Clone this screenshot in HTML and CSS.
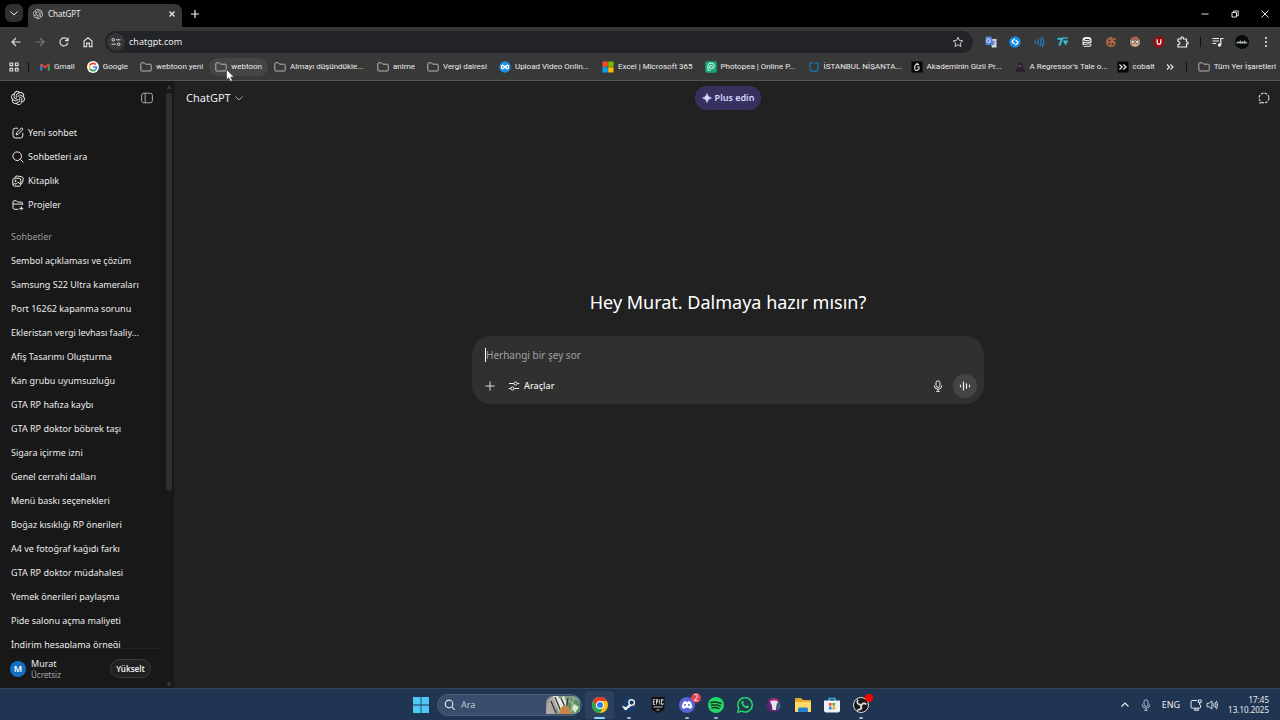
FILE: index.html
```html
<!DOCTYPE html>
<html lang="tr">
<head>
<meta charset="utf-8">
<meta name="viewport" content="width=device-width, initial-scale=1">
<title>ChatGPT</title>
<link rel="stylesheet" href="styles.css">
</head>
<body>
<svg class="defs" aria-hidden="true">
  <symbol id="logo" viewBox="0 0 24 24"><path fill="currentColor" d="M22.2819 9.8211a5.9847 5.9847 0 0 0-.5157-4.9108 6.0462 6.0462 0 0 0-6.5098-2.9A6.0651 6.0651 0 0 0 4.9807 4.1818a5.9847 5.9847 0 0 0-3.9977 2.9 6.0462 6.0462 0 0 0 .7427 7.0966 5.98 5.98 0 0 0 .511 4.9107 6.051 6.051 0 0 0 6.5146 2.9001A5.9847 5.9847 0 0 0 13.2599 24a6.0557 6.0557 0 0 0 5.7718-4.2058 5.9894 5.9894 0 0 0 3.9977-2.9001 6.0557 6.0557 0 0 0-.7475-7.0729zm-9.022 12.6081a4.4755 4.4755 0 0 1-2.8764-1.0408l.1419-.0804 4.7783-2.7582a.7948.7948 0 0 0 .3927-.6813v-6.7369l2.02 1.1686a.071.071 0 0 1 .038.052v5.5826a4.504 4.504 0 0 1-4.4945 4.4944zm-9.6607-4.1254a4.4708 4.4708 0 0 1-.5346-3.0137l.142.0852 4.783 2.7582a.7712.7712 0 0 0 .7806 0l5.8428-3.3685v2.3324a.0804.0804 0 0 1-.0332.0615L9.74 19.9502a4.4992 4.4992 0 0 1-6.1408-1.6464zM2.3408 7.8956a4.485 4.485 0 0 1 2.3655-1.9728V11.6a.7664.7664 0 0 0 .3879.6765l5.8144 3.3543-2.0201 1.1685a.0757.0757 0 0 1-.071 0l-4.8303-2.7865A4.504 4.504 0 0 1 2.3408 7.872zm16.5963 3.8558L13.1038 8.364 15.1192 7.2a.0757.0757 0 0 1 .071 0l4.8303 2.7913a4.4944 4.4944 0 0 1-.6765 8.1042v-5.6772a.79.79 0 0 0-.407-.667zm2.0107-3.0231l-.142-.0852-4.7735-2.7818a.7759.7759 0 0 0-.7854 0L9.409 9.2297V6.8974a.0662.0662 0 0 1 .0284-.0615l4.8303-2.7866a4.4992 4.4992 0 0 1 6.6802 4.66zM8.3065 12.863l-2.02-1.1638a.0804.0804 0 0 1-.038-.0567V6.0742a4.4992 4.4992 0 0 1 7.3757-3.4537l-.142.0805L8.704 5.459a.7948.7948 0 0 0-.3927.6813zm1.0976-2.3654l2.602-1.4998 2.6069 1.4998v2.9994l-2.5974 1.4997-2.6067-1.4997Z"/></symbol>
  <symbol id="folder" viewBox="0 0 12 12"><path d="M.8 2.6q0-.8.8-.8h2.8l1.3 1.4h4.7q.8 0 .8.8v5.2q0 .8-.8.8H1.6q-.8 0-.8-.8z" fill="none" stroke="#b4b4b4"/></symbol>
  <symbol id="chev" viewBox="0 0 10 10"><path d="M1.5 3.5 5 7l3.500-3.500" fill="none" stroke="currentColor"/></symbol>
  <symbol id="mic" viewBox="0 0 12 12"><g fill="none" stroke="currentColor"><rect x="4" y=".8" width="4" height="6.600" rx="2"/><path d="M2.200 5.500a3.800 3.800 0 0 0 7.600 0M6 9.300v2.200M4.300 11.400h3.400"/></g></symbol>
</svg>

<header class="browser">
  <div class="tabstrip">
    <button class="tab-search" aria-label="Sekmelerde ara"><svg class="i10"><use href="#chev"/></svg></button>
    <div class="tab">
      <svg class="i10 favicon"><use href="#logo"/></svg>
      <span class="tab-title">ChatGPT</span>
      <button aria-label="Sekmeyi kapat"><svg class="i8" viewBox="0 0 8 8"><path d="m1.500 1.500 5 5m0-5-5 5" stroke="#eee" stroke-width="1.200"/></svg></button>
    </div>
    <button class="newtab" aria-label="Yeni sekme"><svg class="i10" viewBox="0 0 10 10"><path d="M5 1v8M1 5h8" stroke="#eee" stroke-width="1.200"/></svg></button>
    <div class="window-buttons">
      <button aria-label="Simge durumuna küçült"><svg class="i10" viewBox="0 0 10 10"><path d="M1.500 5h7" stroke="#ddd"/></svg></button>
      <button aria-label="Önceki boyut"><svg class="i10" viewBox="0 0 10 10"><path d="M2 3.500h4.500V8H2zM3.500 3.500V2h4.700v4.700H6.500" fill="none" stroke="#ddd"/></svg></button>
      <button aria-label="Kapat"><svg class="i10" viewBox="0 0 10 10"><path d="m1.500 1.500 7 7m0-7-7 7" stroke="#ddd"/></svg></button>
    </div>
  </div>

  <div class="toolbar">
    <nav class="nav-buttons" aria-label="Gezinme">
      <button aria-label="Geri"><svg class="i12" viewBox="0 0 12 12"><path d="M10.500 6H2m4-4L2 6l4 4" fill="none" stroke="#ddd" stroke-width="1.200"/></svg></button>
      <button aria-label="İleri"><svg class="i12" viewBox="0 0 12 12"><path d="M1.500 6H10M6 2l4 4-4 4" fill="none" stroke="#777" stroke-width="1.200"/></svg></button>
      <button aria-label="Yenile"><svg class="i12" viewBox="0 0 12 12"><path d="M9.800 7A4 4 0 1 1 8.900 3.200L10 4.300M10.100 1.500v3.100H7" fill="none" stroke="#ddd" stroke-width="1.200"/></svg></button>
      <button aria-label="Ana sayfa"><svg class="i12" viewBox="0 0 12 12"><path d="M2 5 6 1.800 10 5v5.600H7.400V7.200H4.600v3.400H2z" fill="none" stroke="#ddd" stroke-width="1.200"/></svg></button>
    </nav>
    <div class="omnibox">
      <button class="site-info" aria-label="Site bilgileri"><svg class="i10" viewBox="0 0 10 10"><g fill="none" stroke="#ddd"><circle cx="2.300" cy="2.800" r="1.300"/><path d="M5 2.800h4.500M.5 7.200H5"/><circle cx="7.700" cy="7.200" r="1.300"/></g></svg></button>
      <input type="text" aria-label="Adres" value="chatgpt.com">
      <button aria-label="Yer işareti ekle"><svg class="i12" viewBox="0 0 12 12"><path d="m6 1.300 1.400 3.100 3.400.4-2.500 2.300.6 3.400L6 8.800l-2.900 1.700.6-3.400-2.500-2.300 3.400-.4z" fill="none" stroke="#ccc"/></svg></button>
    </div>
    <div class="extensions">
      <button aria-label="Çeviri"><svg class="i12" viewBox="0 0 12 12"><path d="M5 3h6.500v8.500H7z" fill="#d5d8e0"/><path d="M.5.500h6L9 9H.500z" fill="#4f7bdc"/><path d="M5.400 3.700A2 2 0 1 0 5.600 5H4" fill="none" stroke="#fff" stroke-width=".9"/><path d="M7.500 5.500h3.300M9.200 5v.8q-.3 2-1.500 3M8.300 6.500q.8 1.500 2 2" fill="none" stroke="#657aa8" stroke-width=".7"/></svg></button>
      <button aria-label="Shazam"><svg class="i12" viewBox="0 0 12 12"><circle cx="6" cy="6" r="5.600" fill="#1690e8"/><path d="M5.500 7.800 3.700 6.500Q2.700 5.500 3.800 4.500L5.900 3M6.500 4.200l1.800 1.300q1 1 0 2L6.100 9" fill="none" stroke="#fff" stroke-width="1.300"/></svg></button>
      <button aria-label="Ses"><svg class="i12" viewBox="0 0 12 12"><path d="M2 4.500q1 1.500 0 3M4.300 3.200q2 2.800 0 5.600M6.700 2q3 4 0 8M9 1q3.600 5 0 10" fill="none" stroke="#2187d8" stroke-width="1.100"/></svg></button>
      <button aria-label="7TV"><svg class="i12" viewBox="0 0 12 12"><path d="M.5 2.800h4.700L2.300 9.500" fill="none" stroke="#36bdd9" stroke-width="2"/><path d="M6.200 5.200 8.500 9.500 11 5.200 10 3.700 8.500 5 7.200 3.700z" fill="#36bdd9"/><path d="M6 2h5" stroke="#36bdd9" stroke-width="1.300"/></svg></button>
      <button aria-label="Depo"><svg class="i12" viewBox="0 0 12 12"><rect x="1.500" y="1" width="9" height="10" rx="3" fill="#eee"/><path d="M4 3.500h4.500M2 5q4 1.500 7.500 0M3 7.500q4 1.300 8 0M2 9.300q4 1 7 0" fill="none" stroke="#333"/></svg></button>
      <button aria-label="Çerezler"><svg class="i12" viewBox="0 0 12 12"><path d="M7.500 1.200A5 5 0 1 0 11 6Q8 6 7.500 1.200z" fill="#ae6544"/><circle cx="9.500" cy="3" r="1.200" fill="#ae6544"/><g fill="#492d27"><circle cx="4.500" cy="4.500" r="1"/><circle cx="4" cy="8" r="1"/><circle cx="7.500" cy="8" r="1.100"/></g></svg></button>
      <button aria-label="Profil uzantısı"><svg class="i12" viewBox="0 0 12 12"><circle cx="6" cy="6" r="5" fill="#d9a582"/><path d="M1.500 4Q3 .500 6 .600T10.500 4z" fill="#a36352"/><g fill="#e8e5db" stroke="#657575"><circle cx="3.800" cy="6" r="1.700"/><circle cx="8.200" cy="6" r="1.700"/></g></svg></button>
      <button aria-label="uBlock"><svg class="i12" viewBox="0 0 12 12"><path d="M3.700.500h4.600l3.200 3.200v4.600l-3.200 3.200H3.700L.5 8.300V3.700z" fill="#990d18"/><path d="M4.200 3.300v3q0 2 1.800 2t1.800-2v-3" fill="none" stroke="#fff" stroke-width="1.200"/></svg></button>
      <button aria-label="Uzantılar"><svg class="i12" viewBox="0 0 12 12"><path d="M1 3h3V2q0-1 1.200-1T6.500 2v1h3v3h.7q1 0 1 1.100t-1 1.100h-.7V11H1V8.500q2-.2 2-1.500T1 5.500z" fill="none" stroke="#eee" stroke-width="1.200"/></svg></button>
    </div>
    <span class="divider"></span>
    <div class="browser-menu">
      <button aria-label="Medya"><svg class="i12" viewBox="0 0 12 12"><path d="M.5 2.500H7M.5 5H7M.5 7.500h3.700M8.800 9V2.500h2.700" fill="none" stroke="#eee" stroke-width="1.200"/><circle cx="7.500" cy="9" r="1.700" fill="#eee"/></svg></button>
      <button aria-label="Profil"><svg class="i14" viewBox="0 0 14 14"><circle cx="7" cy="7" r="7" fill="#080909"/><path d="M1 7.500 3 6.400l1 .7L5.500 5l.7 2 1.500-1 .8 1 1.500-2 .6 1.700L13 8l-3 .8-2-.6-2 .5-2-.5-2 .2z" fill="#a7b2af"/></svg></button>
      <button aria-label="Menü"><svg class="i12" viewBox="0 0 12 12" fill="#eee"><circle cx="6" cy="2" r="1"/><circle cx="6" cy="6" r="1"/><circle cx="6" cy="10" r="1"/></svg></button>
    </div>
  </div>

  <nav class="bookmarks" aria-label="Yer işaretleri">
    <button class="apps" aria-label="Uygulamalar"><svg class="i10" viewBox="0 0 10 10"><path d="M1 1h2.600v2.600H1zM6.400 1H9v2.600H6.400zM1 6.400h2.600V9H1zM6.400 6.400H9V9H6.400z" fill="none" stroke="#ddd" stroke-width="1.200"/></svg></button>
    <span class="divider"></span>
    <a href="#"><svg class="i10" viewBox="0 0 12 12"><path d="M1.500 10.500v-8" stroke="#4285f4" stroke-width="2.200"/><path d="M10.500 10.500v-8" stroke="#34a853" stroke-width="2.200"/><path d="m1 2.500 5 4 5-4" fill="none" stroke="#ea4335" stroke-width="2.200"/></svg>Gmail</a>
    <a href="#"><svg class="i12" viewBox="0 0 12 12"><circle cx="6" cy="6" r="6" fill="#fff"/><g fill="none" stroke-width="1.700"><path d="M8.700 3.600A3.600 3.600 0 0 0 2.900 4.200" stroke="#ea4335"/><path d="M2.900 4.200a3.600 3.600 0 0 0 0 3.600" stroke="#fbbc05"/><path d="M2.900 7.800a3.600 3.600 0 0 0 5.600.8" stroke="#34a853"/><path d="M8.500 8.600Q9.600 7.600 9.600 6H6" stroke="#4285f4"/></g></svg>Google</a>
    <a href="#"><svg class="i12"><use href="#folder"/></svg>webtoon yeni</a>
    <a href="#" class="hovered"><svg class="i12"><use href="#folder"/></svg>webtoon
      <svg class="cursor" viewBox="0 0 9 13" aria-hidden="true"><path d="M.5.500v10.300l2.300-2 1.600 3.600 1.900-.8-1.600-3.500H8z" fill="#fff" stroke="#222" stroke-width=".5"/></svg></a>
    <a href="#" class="wide"><svg class="i12"><use href="#folder"/></svg>Almayı düşündükle...</a>
    <a href="#"><svg class="i12"><use href="#folder"/></svg>anime</a>
    <a href="#"><svg class="i12"><use href="#folder"/></svg>Vergi dairesi</a>
    <a href="#" class="wide"><svg class="i12" viewBox="0 0 12 12"><circle cx="6" cy="6" r="5.700" fill="#1d91e9"/><path d="M6 6Q2.500 9.500 2.500 6T6 6t3.500 0T6 6" fill="none" stroke="#fff" stroke-width="1.300"/></svg>Upload Video Onlin...</a>
    <a href="#"><svg class="i12" viewBox="0 0 12 12"><path fill="#f25022" d="M.5.500h5.300v5.300H.5z"/><path fill="#7fba00" d="M6.200.500h5.300v5.300H6.200z"/><path fill="#00a4ef" d="M.5 6.200h5.300v5.300H.5z"/><path fill="#ffb900" d="M6.200 6.200h5.300v5.300H6.200z"/></svg>Excel | Microsoft 365</a>
    <a href="#" class="wide"><svg class="i12" viewBox="0 0 12 12"><rect x=".3" y=".3" width="11.400" height="11.400" rx="2" fill="#19a878"/><path d="M3 10V4.700Q3 2 6 2t3.300 2.700T6.400 7.600Q4.600 7.600 4.600 6T6.200 4.500 7.300 5.700M5 10V8.500" fill="none" stroke="#e7fff5"/></svg>Photopea | Online P...</a>
    <a href="#" class="wide"><svg class="i12" viewBox="0 0 12 12"><path d="M2 1.500v5Q2 10.500 6 10.500t4-4v-5M4 1v2M8 1v2" fill="none" stroke="#1675a9" stroke-width="1.400"/></svg>İSTANBUL NİŞANTA...</a>
    <a href="#" class="wide"><svg class="i12" viewBox="0 0 12 12"><path d="M.5.500h11v11H.5z" fill="#050505"/><path d="M8 4.200Q7 3 5.200 3.500T3.700 7.500 8 8V6H6M7 2.300l-2 1" fill="none" stroke="#ddd" stroke-width="1.200"/></svg>Akademinin Gizli Pr...</a>
    <a href="#" class="wide"><svg class="i12" viewBox="0 0 12 12"><path d="M2 11V8l2-2 0-4 3-1 2 3v3l2 2v2z" fill="#2c2232"/><path d="M4.500 4h3v2h-3z" fill="#60405f"/></svg>A Regressor's Tale o...</a>
    <a href="#"><svg class="i12" viewBox="0 0 12 12"><rect x=".5" y=".5" width="11" height="11" rx="1" fill="#050505"/><path d="m2.500 3.500 2.700 2.500-2.700 2.500M6.300 3.500 9 6 6.300 8.500" fill="none" stroke="#eee" stroke-width="1.200"/></svg>cobalt</a>
    <div class="bookmarks-end">
      <button aria-label="Diğer yer işaretleri"><svg class="i10" viewBox="0 0 10 10"><path d="m2 2.500 2.500 2.500L2 7.500M5.500 2.500 8 5 5.500 7.500" fill="none" stroke="#eee" stroke-width="1.100"/></svg></button>
      <span class="divider"></span>
      <a href="#"><svg class="i12"><use href="#folder"/></svg>Tüm Yer İşaretleri</a>
    </div>
  </nav>
</header>

<div class="app">
  <aside class="sidebar">
    <div class="sidebar-content">
      <div class="sidebar-top">
        <a href="#" aria-label="ChatGPT"><svg class="i14"><use href="#logo"/></svg></a>
        <button aria-label="Kenar çubuğunu kapat"><svg class="i12" viewBox="0 0 12 12"><rect x=".6" y="1.200" width="10.800" height="9.600" rx="2.200" fill="none" stroke="#aaa"/><path d="M4.200 1.200v9.600" stroke="#aaa"/></svg></button>
      </div>
      <nav class="actions" aria-label="Menü">
        <a href="#"><svg class="i12" viewBox="0 0 12 12"><path d="M6 1.200H3.400Q1 1.200 1 3.600v5Q1 11 3.400 11h5q2.400 0 2.400-2.400V6M4.200 7.900l.4-2.200L9 1.300q.7-.6 1.400 0t.1 1.500L6.200 7.300z" fill="none" stroke="#eee"/></svg>Yeni sohbet</a>
        <a href="#"><svg class="i12" viewBox="0 0 12 12"><circle cx="5.200" cy="5.200" r="4.300" fill="none" stroke="#eee"/><path d="m8.400 8.400 3 3" stroke="#eee"/></svg>Sohbetleri ara</a>
        <a href="#"><svg class="i12" viewBox="0 0 12 12"><g fill="none" stroke="#eee"><path d="M3 3V2.600Q3.500.700 5.200 1l4.300.7q2 .4 1.700 2.300l-.6 3.300Q10.300 8.700 9 8.900"/><rect x=".8" y="3.200" width="8" height="8" rx="2"/><circle cx="3.500" cy="5.900" r=".7"/><path d="m1.200 9.500 1.600-1 1.200.8L6 7.200l2.700 2"/></g></svg>Kitaplık</a>
        <a href="#"><svg class="i12" viewBox="0 0 12 12"><path d="M6.500 10.300H2.600Q1 10.300 1 8.700V3Q1 1.700 2.300 1.700h2l1.400 1.400h3.500q1.500 0 1.500 1.700v1M1 5.100h9.700M9.300 7.400v4M7.300 9.400h4" fill="none" stroke="#eee"/></svg>Projeler</a>
      </nav>
      <section class="chats">
        <h2>Sohbetler</h2>
        <ul>
          <li><a href="#">Sembol açıklaması ve çözüm</a></li>
          <li><a href="#">Samsung S22 Ultra kameraları</a></li>
          <li><a href="#">Port 16262 kapanma sorunu</a></li>
          <li><a href="#">Ekleristan vergi levhası faaliy...</a></li>
          <li><a href="#">Afiş Tasarımı Oluşturma</a></li>
          <li><a href="#">Kan grubu uyumsuzluğu</a></li>
          <li><a href="#">GTA RP hafıza kaybı</a></li>
          <li><a href="#">GTA RP doktor böbrek taşı</a></li>
          <li><a href="#">Sigara içirme izni</a></li>
          <li><a href="#">Genel cerrahi dalları</a></li>
          <li><a href="#">Menü baskı seçenekleri</a></li>
          <li><a href="#">Boğaz kısıklığı RP önerileri</a></li>
          <li><a href="#">A4 ve fotoğraf kağıdı farkı</a></li>
          <li><a href="#">GTA RP doktor müdahalesi</a></li>
          <li><a href="#">Yemek önerileri paylaşma</a></li>
          <li><a href="#">Pide salonu açma maliyeti</a></li>
          <li><a href="#">İndirim hesaplama örneği</a></li>
        </ul>
      </section>
      <footer class="account">
        <span class="avatar">M</span>
        <div class="who"><span>Murat</span><small>Ücretsiz</small></div>
        <button class="upgrade">Yükselt</button>
      </footer>
    </div>
    <div class="scrollbar" aria-hidden="true">
      <svg class="i6" viewBox="0 0 6 6"><path d="M3 1 5.500 5h-5z" fill="#3c3c3c"/></svg>
      <div class="track"><div class="thumb"></div></div>
      <svg class="i6" viewBox="0 0 6 6"><path d="M3 5.500 5.500 1.500h-5z" fill="#3c3c3c"/></svg>
    </div>
  </aside>

  <main class="main">
    <header class="main-top">
      <button class="model">ChatGPT <svg class="i10"><use href="#chev"/></svg></button>
      <button class="plus"><svg class="i10" viewBox="0 0 10 10"><path d="M5 .5Q5.700 4.300 9.500 5 5.700 5.700 5 9.500 4.300 5.700.5 5 4.300 4.300 5 .500z" fill="#dcd8ff" stroke="#dcd8ff" stroke-width=".6"/></svg>Plus edin</button>
      <button class="temp" aria-label="Geçici sohbet"><svg class="i12" viewBox="0 0 12 12"><circle cx="6" cy="6" r="4.900" fill="none" stroke="#ddd" stroke-width="1.100" stroke-dasharray="2.700 1.150"/><path d="M1.200 10.900h2.200" stroke="#ddd"/></svg></button>
    </header>
    <div class="hero">
      <h1>Hey Murat. Dalmaya hazır mısın?</h1>
      <form class="composer">
        <div class="prompt"><span class="caret"></span><input type="text" aria-label="Mesaj" placeholder="Herhangi bir şey sor"></div>
        <div class="tools">
          <button type="button" aria-label="Ekle"><svg class="i12" viewBox="0 0 12 12"><path d="M6 1.500v9M1.500 6h9" stroke="#ddd"/></svg></button>
          <button type="button" class="tool-label"><svg class="i12" viewBox="0 0 12 12"><g fill="none" stroke="#eee"><path d="M1 3.500h4.800M9.300 3.500h2M.7 8.500h2M6.200 8.500h5"/><circle cx="7.500" cy="3.500" r="1.600"/><circle cx="4.400" cy="8.500" r="1.600"/></g></svg>Araçlar</button>
          <button type="button" class="dictate" aria-label="Dikte et"><svg class="i12"><use href="#mic"/></svg></button>
          <button type="button" class="voice" aria-label="Ses modu"><svg class="i12" viewBox="0 0 12 12"><path d="M1.500 5.200v1.600M4.500 2v8M7.500 3.800v4.400M10.500 5.200v1.600" stroke="#eee" stroke-width="1.200" stroke-linecap="round"/></svg></button>
        </div>
      </form>
    </div>
  </main>
</div>

<footer class="taskbar">
  <div class="pinned">
    <button aria-label="Başlat"><svg class="i16" viewBox="0 0 16 16"><path d="M0 0h7.600v7.600H0zM8.400 0H16v7.600H8.400zM0 8.400h7.600V16H0zM8.400 8.400H16V16H8.400z" fill="#4dc8f5"/></svg></button>
    <label class="search">
      <svg class="i12" viewBox="0 0 12 12"><circle cx="5" cy="5" r="3.800" fill="none" stroke="#ddd" stroke-width="1.200"/><path d="m7.800 7.800 3 3" stroke="#ddd" stroke-width="1.200"/></svg>
      <input type="search" placeholder="Ara" aria-label="Ara">
      <svg class="art" viewBox="0 0 34 18"><rect width="34" height="18" rx="7" fill="#829c85"/><path d="M0 18Q0 3 8 0l4 7-4 11z" fill="#b5a6a8"/><path d="M7 0h5l8 18h-6zM13 3l5-3 4 12-3 6z" fill="#e4e8df"/><path d="m9 1 7 17M5 5l5 12M15 2l5 11M22 2l-2 12" stroke="#343a3a" stroke-width="1.400"/><path d="M14 13l4-4 7 2v7H13z" fill="#c88547"/><path d="M23 4Q29 0 34 8v8l-8 1-4-7z" fill="#548e67"/><path d="m23 4 8 10M28 2l-3 14" stroke="#9abd84" stroke-width="1.400"/><path d="m28 8 5 3-4 6-3-4z" fill="#dce8cc"/></svg>
    </label>
    <button class="running active" aria-label="Chrome"><svg class="i16" viewBox="0 0 16 16"><circle cx="8" cy="8" r="8" fill="#fbc116"/><path d="M1.070 4A8 8 0 0 1 14.930 4H8a4 4 0 0 0-3.500 6z" fill="#e33b2e"/><path d="M1.070 4A8 8 0 0 0 8 16l3.500-6A4 4 0 0 1 4.500 10z" fill="#25a652"/><circle cx="8" cy="8" r="3.900" fill="#fff"/><circle cx="8" cy="8" r="3" fill="#3479e8"/></svg></button>
    <button class="running" aria-label="Steam"><svg class="i16" viewBox="0 0 16 16"><circle cx="8" cy="8" r="7.500" fill="#163b68"/><path d="m.8 8.500 4.200 1.700 4-3.700 1.200 2.700-3.700 2.600Q5 14.500 3 12z" fill="#eee"/><circle cx="10.600" cy="5.600" r="2.800" fill="#163b68" stroke="#eee" stroke-width="1.400"/></svg></button>
    <button aria-label="Epic Games"><svg class="i16" viewBox="0 0 16 16"><path d="M1.500 0h13v12.500L8 16l-6.500-3.500z" fill="#10100f"/><path d="M5.200 2.500H3.400v5h1.800M3.400 5h1.500M6.500 7.500v-5h1.300v2.500H6.500M9.700 2.500v5M13 4V2.500h-1.500v5H13V6M3.500 10h9M6.500 13h3" fill="none" stroke="#ddd" stroke-width=".9"/></svg></button>
    <button class="running discord" aria-label="Discord"><svg class="i16" viewBox="0 0 16 16"><circle cx="8" cy="8" r="8" fill="#5865d8"/><path d="M4.500 4.700 6.800 4l.6.900h1.200l.6-.9 2.300.7q1.800 3 1.600 6l-2.500 1.200-.8-1.200H6.200l-.8 1.200-2.500-1.200q-.2-3 1.600-6z" fill="#fff"/><circle cx="6" cy="8" r="1" fill="#5865d8"/><circle cx="10" cy="8" r="1" fill="#5865d8"/></svg><span class="badge">2</span></button>
    <button class="running" aria-label="Spotify"><svg class="i16" viewBox="0 0 16 16"><circle cx="8" cy="8" r="8" fill="#23d965"/><path d="M3 5.500q5-1.500 10 1M3.600 8.300q4.500-1.200 8.500.9M4 10.900q3.700-1 7 .7" fill="none" stroke="#13281c" stroke-width="1.400" stroke-linecap="round"/></svg></button>
    <button aria-label="WhatsApp"><svg class="i16" viewBox="0 0 16 16"><path d="m.8 15.200 1-3.800A7.200 7.200 0 1 1 4.700 14.200z" fill="#203b51" stroke="#25d366" stroke-width="1.500"/><path d="M5 4q.8-.6 1.200.1l.6 1.500-.7 1q1 1.900 2.700 2.600l1-1 1.700.8q.6.500 0 1.400-1 1.300-2.700.8Q5.500 10 4.400 6.500 4 5 5 4z" fill="#28d568"/></svg></button>
    <button aria-label="Topluluk"><svg class="i16" viewBox="0 0 16 16"><circle cx="8" cy="8" r="7.300" fill="#5a276e"/><path d="M2 4Q7-1 13 3L10 5z" fill="#b62d75"/><path d="M12 4q5 5-1 10z" fill="#22768d"/><path d="M4 4.500q4-2 8 0L10.500 8 10 13H6.500L5.800 8z" fill="#eee1ef"/></svg></button>
    <button aria-label="Dosya Gezgini"><svg class="i18" viewBox="0 0 18 16"><path d="M1 2q0-1 1-1h5l2 2h7q1 0 1 1v10q0 1-1 1H2q-1 0-1-1z" fill="#e9a928"/><path d="M1 5h16v9q0 1-1 1H2q-1 0-1-1z" fill="#ffd967"/><path d="M4 15v-3q0-1.500 1.500-1.500h7q1.500 0 1.500 1.500v3z" fill="#2385cf"/></svg></button>
    <button aria-label="Microsoft Store"><svg class="i16" viewBox="0 0 16 16"><path d="M5 4V1.500h6V4" fill="none" stroke="#33aee9" stroke-width="1.500"/><path d="M0 3.500h16V13q0 2.500-2.500 2.500h-11Q0 15.500 0 13z" fill="#eef2f5"/><path d="M4.800 6h2.800v2.800H4.800z" fill="#ec5933"/><path d="M8.400 6h2.800v2.800H8.400z" fill="#70a936"/><path d="M4.800 9.600h2.800v2.800H4.800z" fill="#268fd1"/><path d="M8.400 9.600h2.800v2.800H8.400z" fill="#efad25"/></svg></button>
    <button class="running obs" aria-label="OBS Studio"><svg class="i16" viewBox="0 0 16 16"><circle cx="8" cy="8" r="7.500" fill="#171717" stroke="#ddd"/><g fill="none" stroke="#ddd" stroke-width="1.600"><path d="M5 2.700q-2 3 1 4.700 2.500 1 4.200-1.200M13.500 7.500Q11 5.200 8.800 7.400q-1.700 2 0 4.600M4 13q4 .3 4.500-2.800Q8.500 7.500 5.400 7"/></g></svg><span class="record"></span></button>
  </div>
  <div class="tray">
    <button aria-label="Gizli simgeler"><svg class="i10" viewBox="0 0 10 10"><path d="M1.500 6.500 5 3l3.500 3.500" fill="none" stroke="#eee" stroke-width="1.200"/></svg></button>
    <button class="tray-mic" aria-label="Mikrofon"><svg class="i12"><use href="#mic"/></svg></button>
    <button>ENG</button>
    <button class="status" aria-label="Ağ ve ses"><svg class="i12" viewBox="0 0 12 12"><path d="M7.200 1.500H2Q1 1.500 1 2.500v5.700q0 1 1 1h7.500q1 0 1-1V6M4 11.200h5M5 9.200v2M8 9.200v2M8.300 1h2.900v2.500H8.300zM9.700 3.500V6" fill="none" stroke="#e7eaf0"/></svg><svg class="i12" viewBox="0 0 12 12"><path d="M1 4.300h2L6 2v8L3 7.700H1zM7.500 4.300q1.200 1.700 0 3.400M9 3q2.200 3 0 6M10.300 1.800q3 4.200 0 8.400" fill="none" stroke="#e7eaf0" stroke-width=".9"/></svg></button>
    <button class="clock"><time>17:45</time><time>13.10.2025</time></button>
  </div>
</footer>
</body>
</html>
```
FILE: styles.css
```css
* { box-sizing: border-box; }

body {
  margin: 0;
  height: 100vh;
  display: flex;
  flex-direction: column;
  overflow: hidden;
  background: #212121;
  color: #ececec;
  font: 9px/12px "Noto Sans", "Open Sans", sans-serif;
}

button, input {
  margin: 0;
  padding: 0;
  border: 0;
  background: none;
  color: inherit;
  font: inherit;
  outline: none;
}

input { height: 18px; line-height: 18px; }
button { display: flex; align-items: center; justify-content: center; }
a { color: inherit; text-decoration: none; }
svg { display: block; flex: none; }
h1, h2, ul { margin: 0; padding: 0; font: inherit; list-style: none; }

.defs { position: absolute; width: 0; height: 0; }
.i6 { width: 6px; height: 6px; }
.i8 { width: 8px; height: 8px; }
.i10 { width: 10px; height: 10px; }
.i12 { width: 12px; height: 12px; }
.i14 { width: 14px; height: 14px; }
.i16 { width: 16px; height: 16px; }
.i18 { width: 18px; height: 16px; }

/* Browser frame */
.browser { flex: none; background: #383838; border-bottom: 1px solid #555; }
.tabstrip { display: flex; height: 27px; padding-left: 5px; background: #000; }
.tab-search { width: 18px; height: 18px; margin: 4px 5px 0 0; border-radius: 6px; background: #303030; }
.tab {
  display: flex;
  align-items: center;
  gap: 5px;
  width: 154px;
  margin-top: 4px;
  padding: 0 6px 4px 5px;
  border-radius: 7px 7px 0 0;
  background: #383838;
}
.favicon { color: #ccc; }
.tab-title { flex: 1; font-size: 8px; }
.newtab { width: 26px; }
.window-buttons { display: flex; margin-left: auto; }
.window-buttons button { width: 30px; }

.toolbar { display: flex; align-items: center; height: 30px; padding-right: 2px; }
.nav-buttons { display: flex; padding-left: 4px; }
.nav-buttons button { width: 24px; height: 24px; }
.omnibox {
  flex: 1;
  display: flex;
  align-items: center;
  gap: 4px;
  height: 22px;
  margin-left: 5px;
  padding: 0 9px 0 2px;
  border-radius: 11px;
  background: #222427;
}
.omnibox input { flex: 1; min-width: 0; }
.site-info { width: 18px; height: 18px; border-radius: 9px; background: #343638; }
.extensions { display: flex; padding-left: 6px; }
.extensions button { width: 24px; height: 24px; }
.divider { width: 1px; height: 10px; flex: none; background: #111; }
.toolbar .divider { margin: 0 5px; }
.browser-menu { display: flex; }
.browser-menu button { width: 24px; height: 24px; }

.bookmarks { display: flex; align-items: center; height: 23px; padding: 0 2px 4px 5px; font-family: Roboto, sans-serif; font-size: 8px; white-space: nowrap; }
.bookmarks a { display: flex; align-items: center; gap: 4px; height: 18px; padding: 0 6px; border-radius: 9px; }
.bookmarks .wide { flex: 0 0 103px; min-width: 0; }
.bookmarks .hovered { position: relative; background: #454545; }
.apps { flex: none; width: 18px; margin-right: 5px; }
.bookmarks > .divider { margin-right: 5px; }
.bookmarks-end { display: flex; align-items: center; gap: 5px; margin-left: auto; }
.bookmarks-end button { width: 18px; margin-right: 2px; }
.cursor { position: absolute; left: 17px; top: 11px; width: 9px; height: 13px; z-index: 2; }

/* Application */
.app { flex: 1; min-height: 0; display: flex; }
.sidebar { flex: none; width: 174px; display: flex; background: #181818; }
.sidebar-content { flex: 1; min-width: 0; display: flex; flex-direction: column; }
.sidebar-top { flex: none; display: flex; align-items: center; justify-content: space-between; height: 34px; padding: 0 12px 0 11px; }
.actions { flex: none; padding: 6px 0 0 12px; }
.actions a { display: flex; align-items: center; gap: 4px; height: 24px; }
.chats { flex: 1; min-height: 0; overflow: hidden; padding: 8px 0 0 11px; line-height: 24px; white-space: nowrap; }
.chats h2 { color: #9b9b9b; }
.account {
  flex: none;
  display: flex;
  align-items: center;
  gap: 5px;
  height: 40px;
  margin: 0 2px 0 10px;
  padding-right: 12px;
  border-top: 1px solid #222;
}
.avatar { width: 16px; height: 16px; border-radius: 8px; background: #146fc4; text-align: center; line-height: 16px; font-weight: 600; color: #fff; }
.who { flex: 1; display: flex; flex-direction: column; }
.who small { font-size: 8px; line-height: 10px; color: #aaa; }
.upgrade { width: 41px; height: 19px; border: 1px solid #3a3a3a; border-radius: 10px; background: #212121; font-size: 8px; font-weight: 600; }
.scrollbar { width: 8px; margin-right: 1px; padding: 3px 1px 1px; display: flex; flex-direction: column; align-items: center; gap: 3px; }
.track { flex: 1; width: 6px; }
.thumb { height: 68%; border-radius: 3px; background: #303030; }

.main { flex: 1; min-width: 0; display: flex; flex-direction: column; }
.main-top { display: grid; grid-template-columns: 1fr auto 1fr; align-items: center; height: 34px; padding: 0 10px 0 12px; }
.model { justify-self: start; gap: 3px; font-size: 11px; }
.model svg { color: #aaa; }
.plus { gap: 3px; height: 24px; padding: 0 7px; border-radius: 12px; background: #373160; color: #dcd8ff; font-weight: 600; }
.temp { justify-self: end; }
.hero { flex: 1; display: flex; flex-direction: column; align-items: center; justify-content: center; gap: 22px; padding: 0 24px 109px 26px; }
.hero h1 { font-size: 18px; line-height: 24px; color: #fff; }
.composer { width: 100%; max-width: 512px; padding: 9px 7px 6px 11px; border-radius: 19px; background: #303030; }
.prompt { display: flex; align-items: center; height: 20px; margin-bottom: 9px; padding-left: 2px; font-size: 10px; }
.prompt input { flex: 1; min-width: 0; }
.prompt input::placeholder { color: #a0a0a0; opacity: 1; }
.caret { width: 1px; height: 14px; background: #fff; }
.tools { display: flex; align-items: center; height: 24px; padding-left: 1px; gap: 12px; }
.tool-label { gap: 4px; font-weight: 500; }
.dictate { margin-left: auto; }
.voice { width: 24px; height: 24px; margin-left: -3px; border-radius: 12px; background: #444; }

/* Taskbar */
.taskbar { flex: none; height: 32px; display: grid; grid-template-columns: 1fr auto 1fr; border-top: 1px solid #35445c; background: #203552; }
.pinned { grid-column: 2; display: flex; align-items: center; padding-left: 1px; }
.pinned button { position: relative; width: 29px; height: 28px; }
.search { display: flex; align-items: center; gap: 5px; width: 145px; height: 22px; margin: 0 3px 0 2px; padding: 0 1px 0 6px; border: 1px solid #4a5d7b; border-radius: 11px; background: #394c6b; }
.search input { flex: 1; min-width: 0; appearance: none; }
.search input::placeholder { color: #c3cbd8; opacity: 1; }
.art { width: 34px; height: 18px; }
.active { border-radius: 4px; background: #2d415e; }
.running::after { content: ""; position: absolute; bottom: 0; left: 13px; width: 4px; height: 2px; border-radius: 1px; background: #a4b2c5; }
.active::after { left: 9px; width: 11px; background: #8ccff5; }
.badge { position: absolute; top: 2px; right: 0; width: 10px; height: 10px; border-radius: 5px; background: #df4050; color: #fff; font-size: 8px; line-height: 10px; }
.record { position: absolute; top: 3px; right: 2px; width: 8px; height: 8px; border-radius: 4px; background: #f00; }
.tray { grid-column: 3; justify-self: end; display: flex; align-items: center; gap: 10px; padding-right: 11px; }
.tray-mic { color: #a9bfd5; }
.status { gap: 4px; }
.clock { flex-direction: column; align-items: flex-end; font-size: 8px; line-height: 10px; }
```
